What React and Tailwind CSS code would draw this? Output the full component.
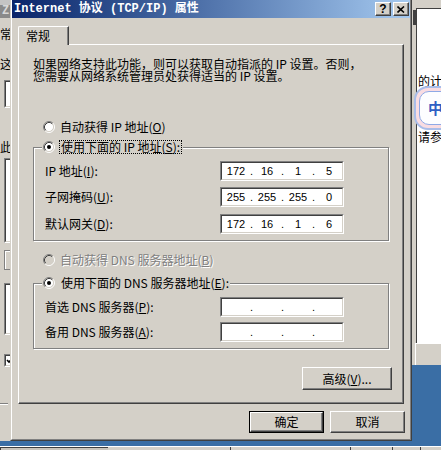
import { Fragment } from 'react';

function Radio({ checked, disabled }) {
  return (
    <svg width="12" height="12" viewBox="0 0 12 12" className="shrink-0">
      <circle cx="6" cy="6" r="4.5" fill={disabled ? '#D4D0C8' : '#fff'} />
      <path d="M2.11 9.89A5.5 5.5 0 0 1 9.89 2.11" fill="none" stroke="#808080" />
      <path d="M9.89 2.11A5.5 5.5 0 0 1 2.11 9.89" fill="none" stroke="#fff" />
      <path d="M2.82 9.18A4.5 4.5 0 0 1 9.18 2.82" fill="none" stroke="#404040" />
      <path d="M9.18 2.82A4.5 4.5 0 0 1 2.82 9.18" fill="none" stroke="#D4D0C8" />
      {checked && <circle cx="6" cy="6" r="2" fill="#000" />}
    </svg>
  );
}

function Sunken({ children, className = '', inner = 'bg-white' }) {
  return (
    <div className={`border border-t-[#808080] border-l-[#808080] border-r-white border-b-white ${className}`}>
      <div className={`h-full border border-t-[#404040] border-l-[#404040] border-r-[#D4D0C8] border-b-[#D4D0C8] ${inner}`}>
        {children}
      </div>
    </div>
  );
}

function Btn({ children, def, className = '' }) {
  return (
    <div className={`bg-[#D4D0C8] ${def ? 'border border-black' : ''} ${className}`}>
      <div className="h-full flex items-center justify-center border border-t-white border-l-white border-r-[#404040] border-b-[#404040] shadow-[inset_-1px_-1px_0_#808080] leading-[12px]">
        {children}
      </div>
    </div>
  );
}

function IpBox({ parts }) {
  return (
    <Sunken className="w-[124px] h-[20px]">
      <div className="flex h-full items-center pl-[3px] text-[11px] [font-family:'Liberation_Sans',sans-serif]">
        {parts.map((p, i) => (
          <Fragment key={i}>
            {i > 0 && <span className="w-[9px] text-center">.</span>}
            <span className="w-[22px] text-center">{p}</span>
          </Fragment>
        ))}
      </div>
    </Sunken>
  );
}

function Row({ label, parts, className = '' }) {
  return (
    <div className={`flex items-center pl-[11px] ${className}`}>
      <div className="w-[175px] leading-[12px]">{label}</div>
      <IpBox parts={parts} />
    </div>
  );
}

const U = ({ c }) => <span className="underline">{c}</span>;

function LeftBg() {
  return (
    <div className="w-[10px] h-[441px] flex flex-col overflow-hidden bg-[#D4D0C8] leading-[12px]">
      <div className="h-[5px] bg-[#c4c4c4]" />
      <div className="h-[13px] bg-[#8a8a8a] pl-[2px] font-bold text-[#d8d8d8] [font-family:'Liberation_Mono',monospace] text-[12px]">Z</div>
      <div className="mt-[10px] w-[14px]">常</div>
      <div className="mt-[18px] w-[14px]">这</div>
      <Sunken className="mt-[10px] ml-[4px] w-[20px] h-[28px] shrink-0" />
      <div className="mt-[33px] w-[14px]">此</div>
      <Sunken className="mt-[5px] ml-[4px] w-[20px] h-[85px] shrink-0" />
      <div className="mt-[7px] ml-[4px] w-[20px] h-[20px] shrink-0 border border-[#808080] shadow-[inset_1px_1px_0_#fff]" />
      <Sunken className="mt-[13px] ml-[4px] w-[20px] h-[52px] shrink-0" />
      <Sunken className="mt-[19px] ml-[4px] w-[13px] h-[13px] shrink-0">
        <svg width="9" height="9" viewBox="0 0 9 9"><path d="M1 4l2 2 4-4" stroke="#000" strokeWidth="1.6" fill="none" /></svg>
      </Sunken>
      <div className="mt-[36px] h-px w-[8px] bg-[#808080] shrink-0" />
      <div className="h-px w-[8px] bg-white shrink-0" />
    </div>
  );
}

function RightBg() {
  return (
    <div className="w-[29px] h-[441px] flex flex-col overflow-hidden">
      <div className="h-[365px] bg-[#D4D0C8] flex">
        <div className="w-[6px] pt-[10px] pl-[1px]">
          <div className="w-[3px] h-[15px] bg-[#404040]" />
        </div>
        <div className="flex-1 flex flex-col pt-[8px]">
          <div className="h-[335px] border-t border-l border-[#404040] bg-white flex flex-col leading-[12px]">
            <div className="mt-[66px] pl-[1px] whitespace-nowrap">的计划</div>
            <div className="-mt-[1px] -ml-[3px] w-[44px] h-[44px] shrink-0 rounded-[14px] border-2 border-[#a9bde9] bg-[#f9dce2] p-[3px]">
              <div className="h-full rounded-[10px] border border-[#8fa9e6] bg-[#fdfdff] flex items-center pl-[8px] text-[15px] font-bold text-[#2f5fc4]">中</div>
            </div>
            <div className="mt-[1px] pl-[1px] whitespace-nowrap">请参考</div>
          </div>
          <div className="flex-1 border-t border-white ml-[-1px] border-l border-l-white" />
        </div>
      </div>
      <div className="flex-1" />
    </div>
  );
}

function Taskbar() {
  return (
    <div className="h-[4px] bg-[#D4D0C8] border-t border-white flex">
      <div className="w-[108px] border-t border-l border-[#404040] bg-[#c8c4bc]" />
      <div className="w-[120px] ml-[3px] border-r border-[#404040]" />
      <div className="w-[120px] border-r border-[#404040]" />
      <div className="w-[42px] border-r border-[#404040]" />
      <div className="w-[28px] border-r border-[#404040]" />
    </div>
  );
}

function Dialog() {
  return (
    <div className="w-[402px] h-[441px] bg-[#D4D0C8] border-l border-r border-b border-l-[#D4D0C8] border-r-[#404040] border-b-[#404040]">
      <div className="h-full flex flex-col border-l border-r border-b border-l-white border-r-[#808080] border-b-[#808080]">
        <div className="h-[18px] shrink-0 flex items-center bg-linear-to-r from-[#0A246A] to-[#A6CAF0]">
          <div className="pl-[2px] font-bold text-white text-[12px] leading-[14px] whitespace-nowrap [font-family:'Liberation_Mono','Noto_Sans_CJK_SC',monospace]">
            Internet 协议 (TCP/IP) 属性
          </div>
          <div className="ml-auto flex gap-[2px] pr-[1px]">
            <Btn className="w-[16px] h-[14px]">
              <span className="text-[12px] font-bold [font-family:'Liberation_Sans',sans-serif] leading-[10px]">?</span>
            </Btn>
            <Btn className="w-[16px] h-[14px]">
              <svg width="8" height="7" viewBox="0 0 8 7">
                <path d="M0.5 0.5L7 6.5M7 0.5L0.5 6.5" stroke="#000" strokeWidth="1.6" />
              </svg>
            </Btn>
          </div>
        </div>

        <div className="flex-1 flex flex-col pt-[8px] px-[6px]">
          <div className="flex">
            <div className="relative z-10 -mb-px h-[19px] w-[51px] bg-[#D4D0C8] border-t border-l border-r border-t-white border-l-white border-r-[#404040] rounded-tl-[2px] shadow-[inset_-1px_0_0_#808080] pl-[7px] pt-[3px] leading-[12px]">
              常规
            </div>
          </div>
          <div className="h-[360px] shrink-0 border-t border-l border-t-white border-l-white border-r border-b border-r-[#404040] border-b-[#404040] shadow-[inset_-1px_-1px_0_#808080] px-[14px] flex flex-col">
            <div className="mt-[13px] leading-[12px] whitespace-nowrap">
              如果网络支持此功能，则可以获取自动指派的 IP 设置。否则，
              <br />
              您需要从网络系统管理员处获得适当的 IP 设置。
            </div>

            <div className="mt-[38px] ml-[10px] h-[14px] flex items-center gap-[5px] leading-[12px]">
              <Radio />
              <span>自动获得 IP 地址(<U c="O" />)</span>
            </div>

            <div className="mt-[13px] h-[94px] shrink-0 flex flex-col border border-[#808080] shadow-[inset_1px_1px_0_#fff,1px_1px_0_#fff]">
              <div className="-mt-[8px] ml-[8px] self-start h-[14px] bg-[#D4D0C8] px-[1px] flex items-center gap-[4px]">
                <Radio checked />
                <span className="h-[14px] border border-dotted border-black px-[1px] leading-[12px]">
                  使用下面的 IP 地址(<U c="S" />):
                </span>
              </div>
              <Row className="mt-[7px]" label={<>IP 地址(<U c="I" />):</>} parts={['172', '16', '1', '5']} />
              <Row className="mt-[6px]" label={<>子网掩码(<U c="U" />):</>} parts={['255', '255', '255', '0']} />
              <Row className="mt-[7px]" label={<>默认网关(<U c="D" />):</>} parts={['172', '16', '1', '6']} />
            </div>

            <div className="mt-[12px] ml-[10px] h-[14px] flex items-center gap-[5px] leading-[12px] text-[#808080] [text-shadow:1px_1px_0_#fff]">
              <Radio disabled />
              <span>自动获得 DNS 服务器地址(<U c="B" />)</span>
            </div>

            <div className="mt-[16px] h-[66px] shrink-0 flex flex-col border border-[#808080] shadow-[inset_1px_1px_0_#fff,1px_1px_0_#fff]">
              <div className="-mt-[8px] ml-[8px] self-start h-[14px] bg-[#D4D0C8] px-[1px] flex items-center gap-[4px] leading-[12px]">
                <Radio checked />
                <span className="pl-[2px]">使用下面的 DNS 服务器地址(<U c="E" />):</span>
              </div>
              <Row className="mt-[7px]" label={<>首选 DNS 服务器(<U c="P" />):</>} parts={['', '', '', '']} />
              <Row className="mt-[5px]" label={<>备用 DNS 服务器(<U c="A" />):</>} parts={['', '', '', '']} />
            </div>

            <Btn className="mt-[18px] self-end -mr-[3px] w-[90px] h-[23px] shrink-0">
              高级(<U c="V" />)...
            </Btn>
          </div>

          <div className="mt-[7px] -mr-[1px] flex justify-end gap-[6px]">
            <Btn def className="w-[75px] h-[22px]">确定</Btn>
            <Btn className="w-[75px] h-[22px]">取消</Btn>
          </div>
        </div>
      </div>
    </div>
  );
}

export default function App() {
  return (
    <div className="w-[441px] h-[450px] overflow-hidden flex flex-col bg-[#3A6EA5] [font-family:'Noto_Sans_CJK_SC',sans-serif] text-[12px] leading-[14px] text-black">
      <div className="flex h-[441px] shrink-0">
        <LeftBg />
        <Dialog />
        <RightBg />
      </div>
      <div className="h-[5px] shrink-0" />
      <Taskbar />
    </div>
  );
}
